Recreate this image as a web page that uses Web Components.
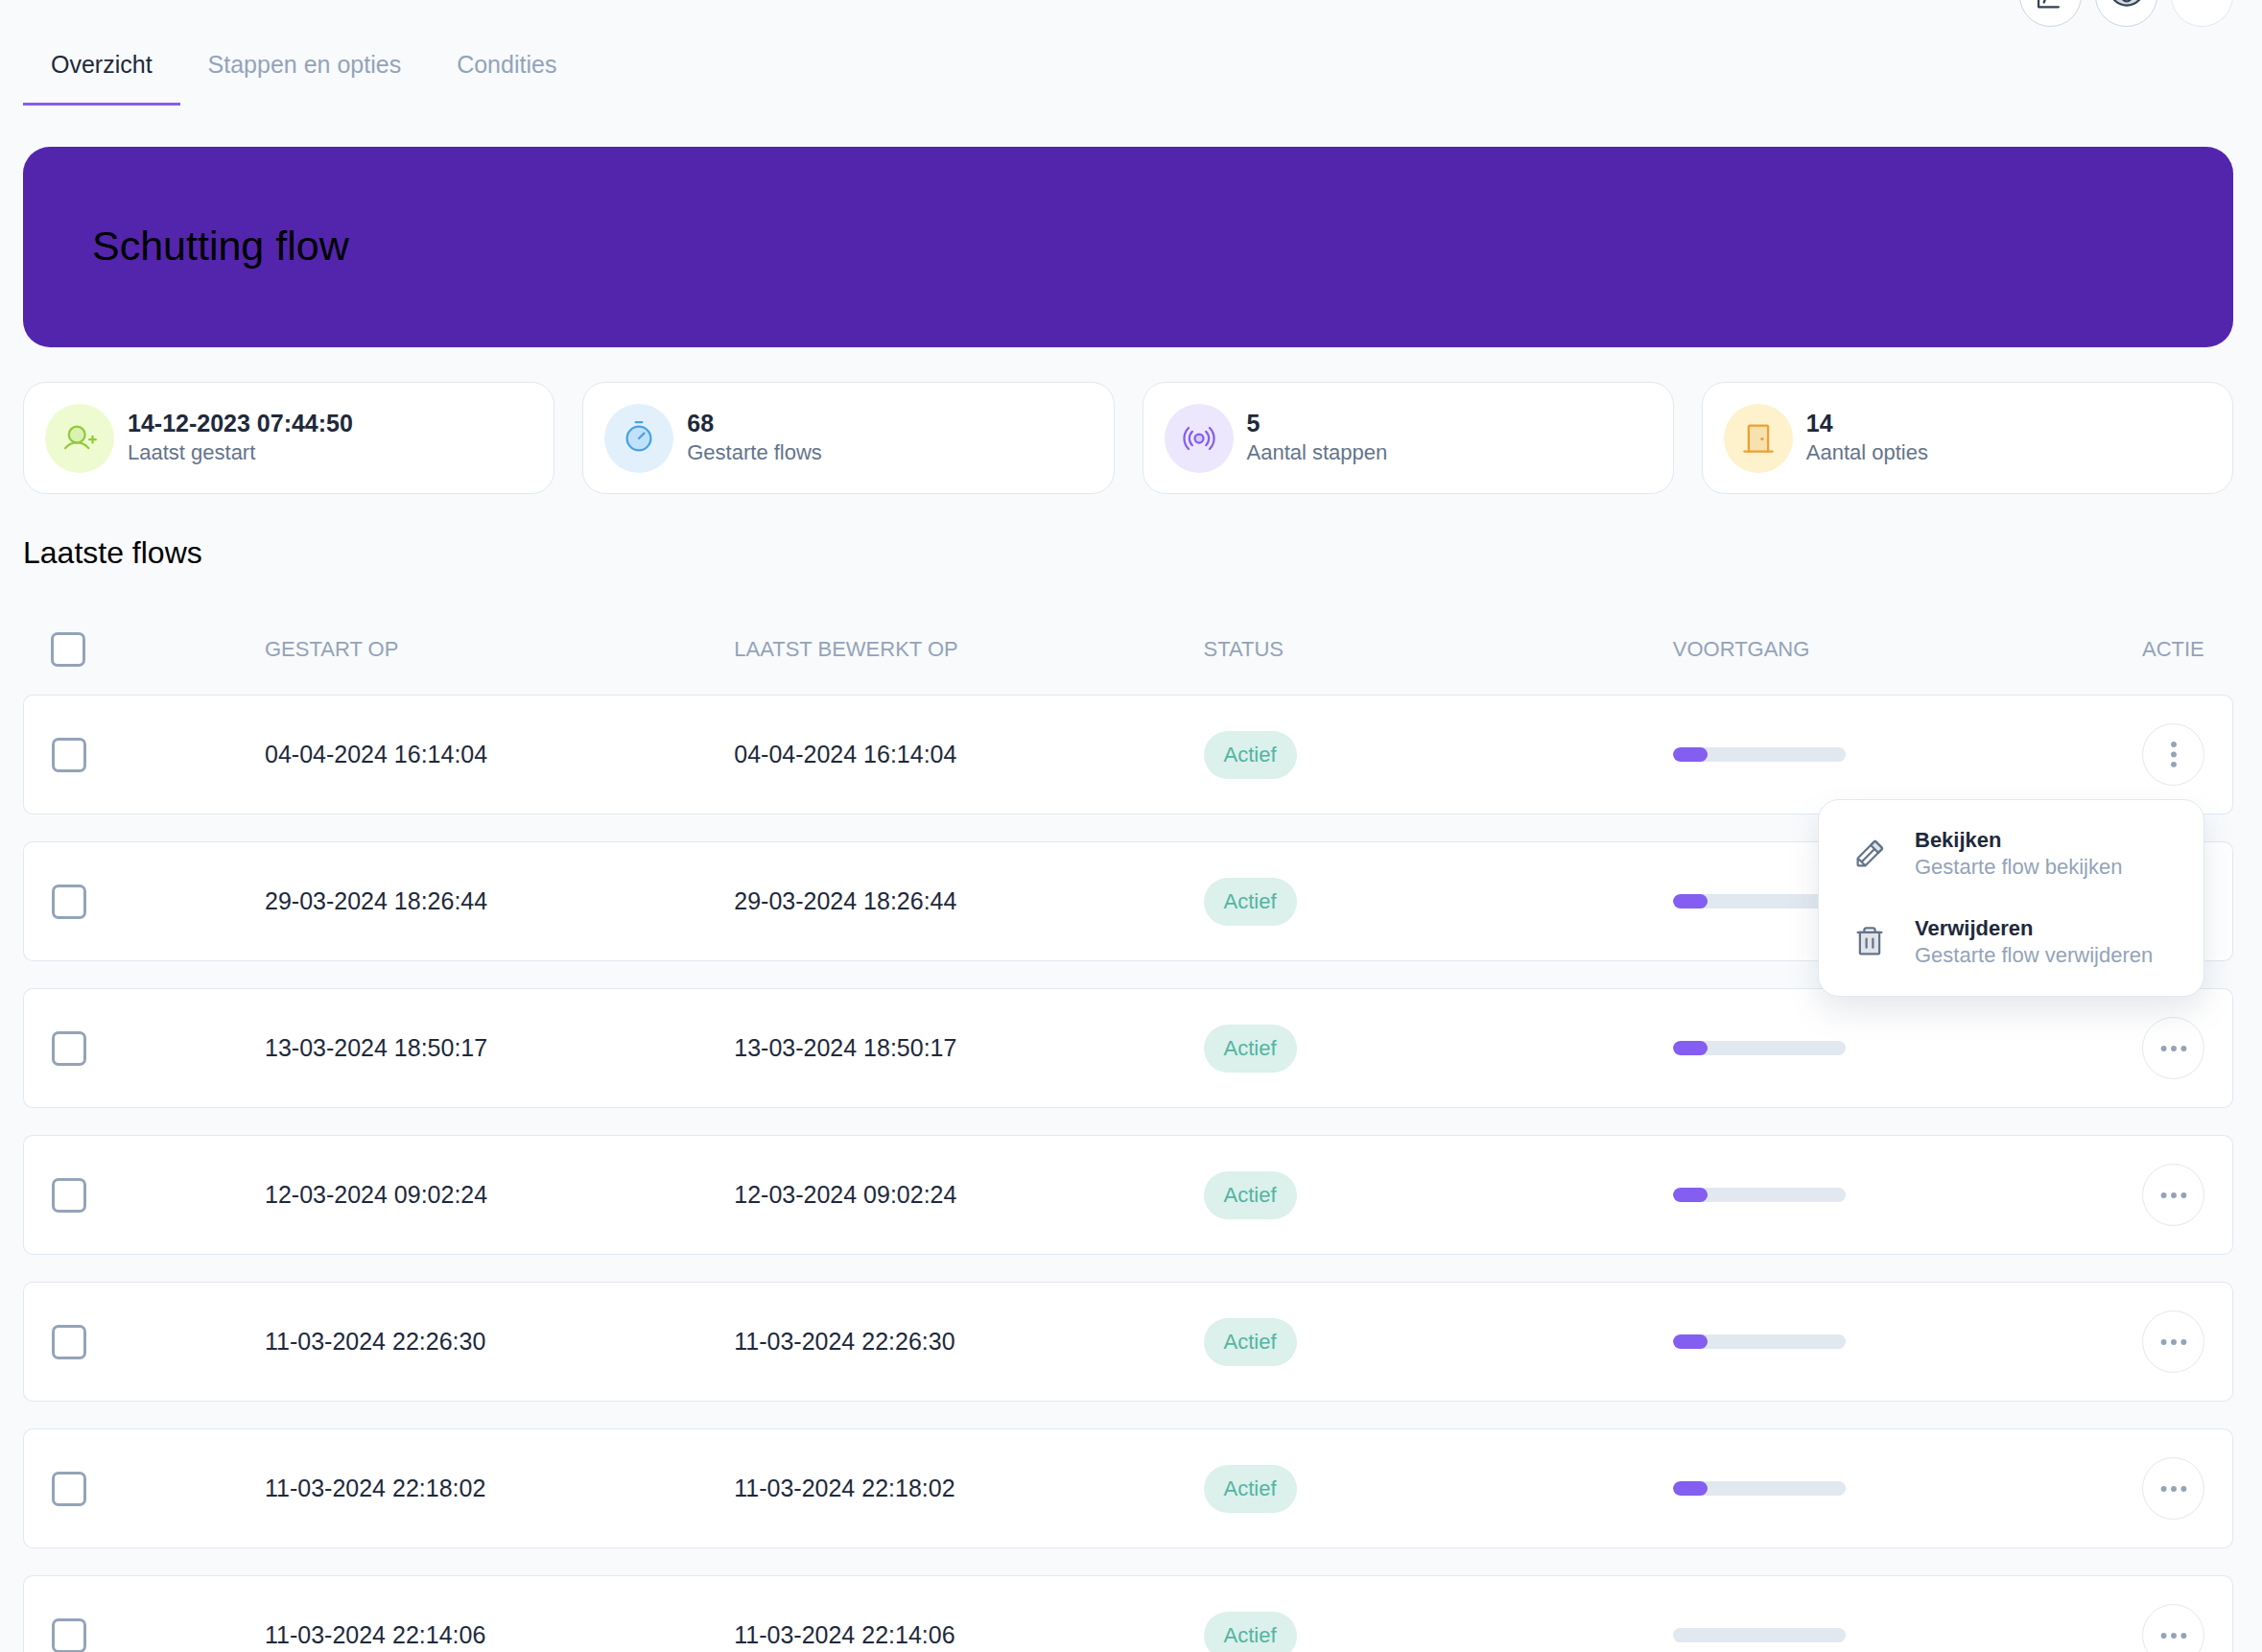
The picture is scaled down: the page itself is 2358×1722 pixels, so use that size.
<!DOCTYPE html>
<html lang="nl">
<head>
<meta charset="utf-8">
<meta name="viewport" content="width=device-width, initial-scale=1">
<title>Schutting flow</title>
<style>
    :root {
        --slate-50: #f8fafc;
        --slate-200: #e2e8f0;
        --slate-300: #cbd5e1;
        --slate-400: #94a3b8;
        --slate-500: #64748b;
        --slate-800: #1e293b;
        --violet: #845ef0;
        --violet-dark: #5325ad;
    }
    html, body {
        height: 100%;
        margin: 0;
    }
    body {
        overflow: hidden;
        background: var(--slate-50);
        color: var(--slate-800);
        font-family: "Liberation Sans", Arial, Helvetica, sans-serif;
        font-size: 25px;
    }
</style>
</head>
<body>

<flow-page>
    <flow-toolbar slot="toolbar">
        <round-button icon="chart" label="Statistieken" strong></round-button>
        <round-button icon="eye" label="Voorbeeld" strong></round-button>
        <round-button label="Meer"></round-button>
    </flow-toolbar>

    <flow-tabs slot="tabs">
        <a href="#overzicht" aria-current="page">Overzicht</a>
        <a href="#stappen">Stappen en opties</a>
        <a href="#condities">Condities</a>
    </flow-tabs>

    <flow-banner>Schutting flow</flow-banner>

    <stat-grid>
        <stat-card icon="user" tone="lime"><span slot="value">14-12-2023 07:44:50</span>Laatst gestart</stat-card>
        <stat-card icon="timer" tone="blue"><span slot="value">68</span>Gestarte flows</stat-card>
        <stat-card icon="broadcast" tone="violet"><span slot="value">5</span>Aantal stappen</stat-card>
        <stat-card icon="door" tone="amber"><span slot="value">14</span>Aantal opties</stat-card>
    </stat-grid>

    <section-title>Laatste flows</section-title>

    <flow-table></flow-table>
</flow-page>

<script>
const icons = {
    chart: `<path d="M36 40V208H184M76 174 104 104"/>`,
    eye: `<path class="tint" d="M128 60C48 60 16 128 16 128s32 68 112 68 112-68 112-68S208 60 128 60Z"/>
        <circle cx="128" cy="128" r="38"/>`,
    user: `<circle class="tint" cx="108" cy="100" r="60"/>
        <path d="M22.2 200a112 112 0 0 1 171.6 0M200 136h48M224 112v48"/>`,
    timer: `<circle class="tint" cx="128" cy="128" r="88"/>
        <path d="M128 128 167.6 88.4M104 8h48"/>`,
    broadcast: `<circle class="tint" cx="128" cy="128" r="32"/>
        <path d="M77 77a72 72 0 0 0 0 102M179 77a72 72 0 0 1 0 102M50 50a110 110 0 0 0 0 156M206 50a110 110 0 0 1 0 156"/>`,
    door: `<path class="tint" d="M56 224V40a8 8 0 0 1 8-8H192a8 8 0 0 1 8 8V224"/>
        <path d="M24 224H232"/><circle class="dot" cx="156" cy="132" r="12"/>`,
    pencil: `<path class="tint" d="M192 120 136 64l26.3-26.3a8 8 0 0 1 11.4 0l44.6 44.6a8 8 0 0 1 0 11.4Z"/>
        <path d="M96 216H48a8 8 0 0 1-8-8V163.3a7.9 7.9 0 0 1 2.3-5.6l120-120a8 8 0 0 1 11.4 0l44.6 44.6a8 8 0 0 1 0 11.4l-120 120A7.9 7.9 0 0 1 96 216ZM164 92 68 188M95.5 215.5 40.5 160.5"/>`,
    trash: `<path class="tint" d="M200 56V208a8 8 0 0 1-8 8H64a8 8 0 0 1-8-8V56Z"/>
        <path d="M216 56H40M104 104v64M152 104v64M168 56V40a16 16 0 0 0-16-16H104A16 16 0 0 0 88 40V56"/>`,
    dots: `<circle class="dot" cx="54" cy="128" r="21"/><circle class="dot" cx="128" cy="128" r="21"/><circle class="dot" cx="202" cy="128" r="21"/>`,
    'dots-vertical': `<circle class="dot" cx="128" cy="50" r="21"/><circle class="dot" cx="128" cy="124" r="21"/><circle class="dot" cx="128" cy="198" r="21"/>`,
};

class FlowIcon extends HTMLElement {
    constructor() {
        super();
        this.attachShadow({ mode: 'open' });
    }

    connectedCallback() {
        this.shadowRoot.innerHTML = `
            <style>
            :host { display: block; width: 36px; height: 36px; flex: none; }
            svg {
                display: block;
                width: 100%;
                height: 100%;
                overflow: visible;
                fill: none;
                stroke: currentColor;
                stroke-width: 16;
                stroke-linecap: round;
                stroke-linejoin: round;
            }
            .tint { fill: currentColor; fill-opacity: .2; }
            .dot { fill: currentColor; stroke: none; }
            </style>
            <svg viewBox="0 0 256 256" aria-hidden="true">${icons[this.getAttribute('name')] || ''}</svg>
        `;
    }
}

class FlowPage extends HTMLElement {
    constructor() {
        super();
        this.attachShadow({ mode: 'open' });
        this.shadowRoot.innerHTML = `
            <style>
            :host { display: block; }
            .page {
                display: flex;
                flex-direction: column;
                padding: 0 30px 0 24px;
                margin-top: -37px;
            }
            main {
                display: flex;
                flex-direction: column;
                padding-top: 43px;
            }
            </style>
            <div class="page">
                <slot name="toolbar"></slot>
                <slot name="tabs"></slot>
                <main><slot></slot></main>
            </div>
        `;
    }
}

class FlowToolbar extends HTMLElement {
    constructor() {
        super();
        this.attachShadow({ mode: 'open' });
        this.shadowRoot.innerHTML = `
            <style>
            :host { display: flex; justify-content: flex-end; gap: 14px; }
            </style>
            <slot></slot>
        `;
    }
}

class RoundButton extends HTMLElement {
    constructor() {
        super();
        this.attachShadow({ mode: 'open' });
    }

    connectedCallback() {
        const icon = this.getAttribute('icon');

        this.shadowRoot.innerHTML = `
            <style>
            :host { display: block; width: 65px; height: 65px; }
            button {
                display: flex;
                align-items: center;
                justify-content: center;
                width: 100%;
                height: 100%;
                padding: 0;
                border: 1px solid var(--slate-200);
                border-radius: 50%;
                background: #fff;
                color: var(--slate-400);
                cursor: pointer;
            }
            :host([strong]) button { border-color: var(--slate-300); color: #334155; }
            </style>
            <button type="button" aria-label="${this.getAttribute('label')}">
                ${icon ? `<flow-icon name="${icon}"></flow-icon>` : ''}
            </button>
        `;
    }
}

class FlowTabs extends HTMLElement {
    constructor() {
        super();
        this.attachShadow({ mode: 'open' });
        this.shadowRoot.innerHTML = `
            <style>
            :host { display: block; }
            nav { display: flex; }
            ::slotted(a) {
                padding: 24px 29px 25px;
                border-bottom: 3px solid transparent;
                color: var(--slate-400);
                line-height: 30px;
                text-decoration: none;
            }
            ::slotted(a[aria-current]) {
                border-color: var(--violet);
                color: var(--slate-800);
            }
            </style>
            <nav><slot></slot></nav>
        `;
    }
}

class FlowBanner extends HTMLElement {
    constructor() {
        super();
        this.attachShadow({ mode: 'open' });
        this.shadowRoot.innerHTML = `
            <style>
            :host {
                display: block;
                padding: 71px 72px 74px;
                border-radius: 28px;
                background: var(--violet-dark);
                color: #000;
            }
            h1 { margin: 0; font-size: 43px; font-weight: 400; line-height: 64px; }
            </style>
            <h1><slot></slot></h1>
        `;
    }
}

class StatGrid extends HTMLElement {
    constructor() {
        super();
        this.attachShadow({ mode: 'open' });
        this.shadowRoot.innerHTML = `
            <style>
            :host {
                display: grid;
                grid-template-columns: repeat(4, 1fr);
                gap: 29px;
                margin-top: 36px;
            }
            </style>
            <slot></slot>
        `;
    }
}

class StatCard extends HTMLElement {
    constructor() {
        super();
        this.attachShadow({ mode: 'open' });
    }

    connectedCallback() {
        this.shadowRoot.innerHTML = `
            <style>
            :host {
                display: flex;
                align-items: center;
                gap: 14px;
                padding: 22px 22px 21px;
                border: 1px solid var(--slate-200);
                border-radius: 24px;
                background: #fff;
            }
            .badge {
                display: flex;
                align-items: center;
                justify-content: center;
                width: 72px;
                height: 72px;
                border-radius: 50%;
            }
            :host([tone=lime]) .badge { background: #eefbd0; color: #8fcb3c; }
            :host([tone=blue]) .badge { background: #e2f0fc; color: #46a2e4; }
            :host([tone=violet]) .badge { background: #ece7fd; color: var(--violet); }
            :host([tone=amber]) .badge { background: #fdf2cc; color: #ec9f35; }
            .text { padding-bottom: 2px; }
            .value { font-size: 25px; font-weight: 700; line-height: 32px; }
            .label { color: var(--slate-500); font-size: 22px; line-height: 30px; }
            </style>
            <div class="badge"><flow-icon name="${this.getAttribute('icon')}"></flow-icon></div>
            <div class="text">
                <div class="value"><slot name="value"></slot></div>
                <div class="label"><slot></slot></div>
            </div>
        `;
    }
}

class SectionTitle extends HTMLElement {
    constructor() {
        super();
        this.attachShadow({ mode: 'open' });
        this.shadowRoot.innerHTML = `
            <style>
            :host { display: block; margin: 41px 0 34px; color: #000; }
            h2 { margin: 0; font-size: 32px; font-weight: 400; line-height: 40px; }
            </style>
            <h2><slot></slot></h2>
        `;
    }
}

class ActionMenu extends HTMLElement {
    constructor() {
        super();
        this.attachShadow({ mode: 'open' });
        this.shadowRoot.innerHTML = `
            <style>
            :host {
                display: block;
                box-sizing: border-box;
                width: 403px;
                padding: 10px 0;
                border: 1px solid var(--slate-200);
                border-radius: 22px;
                background: #fff;
                box-shadow: 0 16px 32px rgba(100, 116, 139, .16);
            }
            button {
                display: flex;
                align-items: center;
                gap: 29px;
                width: 100%;
                padding: 18px 35px;
                border: 0;
                background: none;
                color: var(--slate-500);
                font: inherit;
                font-size: 22px;
                line-height: 28px;
                text-align: left;
                white-space: nowrap;
                cursor: pointer;
            }
            strong { display: block; color: var(--slate-800); }
            small { display: block; color: var(--slate-400); font-size: 22px; }
            </style>
            <button type="button" role="menuitem">
                <flow-icon name="pencil"></flow-icon>
                <span><strong>Bekijken</strong><small>Gestarte flow bekijken</small></span>
            </button>
            <button type="button" role="menuitem">
                <flow-icon name="trash"></flow-icon>
                <span><strong>Verwijderen</strong><small>Gestarte flow verwijderen</small></span>
            </button>
        `;
    }

    connectedCallback() {
        this.setAttribute('role', 'menu');
    }
}

class RowAction extends HTMLElement {
    static get observedAttributes() {
        return ['open'];
    }

    constructor() {
        super();
        this.attachShadow({ mode: 'open' });
        this.shadowRoot.addEventListener('click', e => {
            if (e.target.closest('round-button')) this.toggleAttribute('open');
        });
    }

    connectedCallback() {
        this.render();
    }

    attributeChangedCallback() {
        if (this.isConnected) this.render();
    }

    render() {
        const open = this.hasAttribute('open');

        this.shadowRoot.innerHTML = `
            <style>
            :host { display: block; position: relative; width: 65px; }
            /* the menu hangs below the button and covers the next row */
            action-menu {
                position: absolute;
                top: calc(100% + 14px);
                right: 0;
                z-index: 10;
            }
            </style>
            <round-button icon="${open ? 'dots-vertical' : 'dots'}" label="Acties"></round-button>
            ${open ? '<action-menu></action-menu>' : ''}
        `;
    }
}

class StatusPill extends HTMLElement {
    constructor() {
        super();
        this.attachShadow({ mode: 'open' });
        this.shadowRoot.innerHTML = `
            <style>
            :host {
                display: inline-block;
                padding: 0 21px;
                border-radius: 26px;
                background: #dcf0ec;
                color: #52b5a2;
                font-size: 22px;
                line-height: 50px;
                vertical-align: middle;
            }
            </style>
            <slot></slot>
        `;
    }
}

const flows = [
    ['04-04-2024 16:14:04', 20],
    ['29-03-2024 18:26:44', 20],
    ['13-03-2024 18:50:17', 20],
    ['12-03-2024 09:02:24', 20],
    ['11-03-2024 22:26:30', 20],
    ['11-03-2024 22:18:02', 20],
    ['11-03-2024 22:14:06', 0],
];

class FlowTable extends HTMLElement {
    constructor() {
        super();
        this.attachShadow({ mode: 'open' });
    }

    connectedCallback() {
        const rows = flows.map(([date, progress], i) => `
            <tr>
                <td><input type="checkbox" aria-label="Selecteer ${date}"></td>
                <td>${date}</td>
                <td>${date}</td>
                <td><status-pill>Actief</status-pill></td>
                <td><progress max="100" value="${progress}" aria-label="Voortgang"></progress></td>
                <td><row-action ${i === 0 ? 'open' : ''}></row-action></td>
            </tr>`).join('');

        this.shadowRoot.innerHTML = `
            <style>
            :host { display: block; }
            table {
                width: 100%;
                table-layout: fixed;
                border-collapse: separate;
                border-spacing: 0 28px;
            }
            th, td {
                box-sizing: border-box;
                padding: 0;
                text-align: left;
                vertical-align: middle;
                white-space: nowrap;
            }
            th {
                height: 38px;
                color: var(--slate-400);
                font-size: 22px;
                font-weight: 400;
                text-transform: uppercase;
            }
            th:first-child { width: 252px; }
            th:last-child { width: 95px; }
            td {
                height: 125px;
                border: solid var(--slate-200);
                border-width: 1px 0;
                background: #fff;
            }
            th:first-child, td:first-child { padding-left: 29px; }
            td:first-child { border-left-width: 1px; border-radius: 10px 0 0 10px; }
            td:last-child { border-right-width: 1px; border-radius: 0 10px 10px 0; }
            input {
                appearance: none;
                display: block;
                width: 36px;
                height: 36px;
                margin: 0;
                border: 3px solid var(--slate-400);
                border-radius: 7px;
                background: #fff;
            }
            input:checked { background: var(--violet); }
            progress {
                appearance: none;
                display: block;
                width: 180px;
                height: 15px;
                border: 0;
                border-radius: 8px;
                background: var(--slate-200);
                overflow: hidden;
            }
            progress::-webkit-progress-bar { background: var(--slate-200); border-radius: 8px; }
            progress::-webkit-progress-value { background: var(--violet); border-radius: 8px; }
            progress::-moz-progress-bar { background: var(--violet); border-radius: 8px; }
            </style>
            <table>
                <thead>
                    <tr>
                        <th><input type="checkbox" aria-label="Selecteer alles"></th>
                        <th>Gestart op</th>
                        <th>Laatst bewerkt op</th>
                        <th>Status</th>
                        <th>Voortgang</th>
                        <th>Actie</th>
                    </tr>
                </thead>
                <tbody>${rows}</tbody>
            </table>
        `;
    }
}

customElements.define('flow-icon', FlowIcon);
customElements.define('flow-page', FlowPage);
customElements.define('flow-toolbar', FlowToolbar);
customElements.define('round-button', RoundButton);
customElements.define('flow-tabs', FlowTabs);
customElements.define('flow-banner', FlowBanner);
customElements.define('stat-grid', StatGrid);
customElements.define('stat-card', StatCard);
customElements.define('section-title', SectionTitle);
customElements.define('action-menu', ActionMenu);
customElements.define('row-action', RowAction);
customElements.define('status-pill', StatusPill);
customElements.define('flow-table', FlowTable);
</script>
</body>
</html>
